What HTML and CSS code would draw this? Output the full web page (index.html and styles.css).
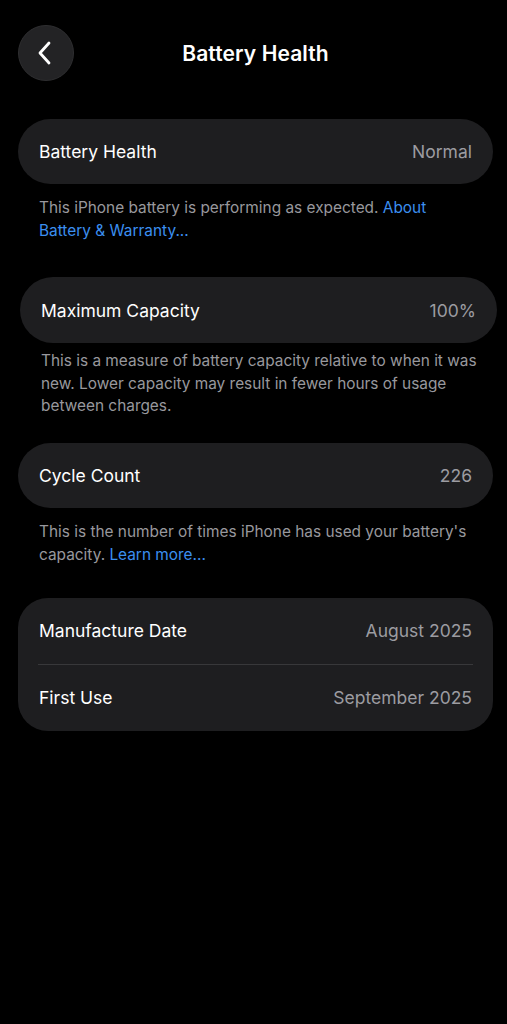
FILE: index.html
```html
<!DOCTYPE html>
<html lang="en">
<head>
    <meta charset="UTF-8">
    <meta name="viewport" content="width=device-width, initial-scale=1.0">
    <title>Battery Health</title>
    <link rel="stylesheet" href="styles.css">
</head>
<body>
    <div class="page">
        <div class="header">
            <button class="back" aria-label="Back">
                <svg width="18" height="26" viewBox="0 0 18 26">
                    <path d="M13 3 L4 13 L13 23" fill="none" stroke="#fff" stroke-width="2.8" stroke-linecap="round" stroke-linejoin="round"/>
                </svg>
            </button>
            <div class="title">Battery Health</div>
        </div>

        <div class="section">
            <div class="card">
                <div class="row">
                    <span class="label">Battery Health</span>
                    <span class="value">Normal</span>
                </div>
            </div>
            <p class="note">This iPhone battery is performing as expected. <a href="#">About Battery &amp; Warranty...</a></p>
        </div>

        <div class="section section-shifted">
            <div class="card">
                <div class="row">
                    <span class="label">Maximum Capacity</span>
                    <span class="value">100%</span>
                </div>
            </div>
            <p class="note">This is a measure of battery capacity relative to when it was new. Lower capacity may result in fewer hours of usage between charges.</p>
        </div>

        <div class="section">
            <div class="card">
                <div class="row">
                    <span class="label">Cycle Count</span>
                    <span class="value">226</span>
                </div>
            </div>
            <p class="note">This is the number of times iPhone has used your battery's capacity. <a href="#">Learn more...</a></p>
        </div>

        <div class="section section-group">
            <div class="card card-group">
                <div class="row">
                    <span class="label">Manufacture Date</span>
                    <span class="value">August 2025</span>
                </div>
                <div class="row">
                    <span class="label">First Use</span>
                    <span class="value">September 2025</span>
                </div>
            </div>
        </div>
    </div>
</body>
</html>
```

FILE: styles.css
```css
body {
    margin: 0;
    padding: 0;
    background-color: #000000;
    font-family: Inter, "Noto Sans", sans-serif;
    color: #FFFFFF;
}

.page {
    padding: 0 14px 0 18px;
}

.header {
    position: relative;
    display: flex;
    align-items: center;
    padding-top: 25px;
    height: 56px;
}

.back {
    width: 56px;
    height: 56px;
    border-radius: 50%;
    border: 1px solid #2e2e30;
    background-color: #232325;
    display: flex;
    align-items: center;
    justify-content: center;
    padding: 0 3px 0 0;
    cursor: pointer;
}

.title {
    position: absolute;
    left: 0;
    right: 0;
    margin-left: -18px;
    margin-right: -14px;
    padding-left: 4px;
    text-align: center;
    font-size: 21px;
    font-weight: 600;
    letter-spacing: 0.1px;
    pointer-events: none;
}

.section {
    margin-top: 38px;
}

.section + .section {
    margin-top: 35px;
}

.card {
    background-color: #1e1e20;
    border-radius: 33px;
}

.row {
    display: flex;
    justify-content: space-between;
    align-items: center;
    height: 65px;
    padding: 0 21px;
}

.label {
    font-size: 17.5px;
    color: #FFFFFF;
}

.value {
    font-size: 17.5px;
    color: #9c9ca1;
}

.note {
    margin: 12px 0 0;
    padding: 0 21px;
    font-size: 15.4px;
    line-height: 23px;
    color: #98989d;
}

.note a {
    color: #3b8ff0;
    text-decoration: none;
}

.section-shifted {
    margin-left: 2px;
    margin-right: -4px;
}

.section-shifted .row {
    height: 66px;
}

.section-shifted .note {
    margin-top: 7px;
    padding-right: 14px;
    line-height: 22.5px;
}

.section-shifted + .section {
    margin-top: 25px;
}

.section + .section-group {
    margin-top: 32px;
}

.card-group {
    border-radius: 30px;
}

.card-group .row {
    height: 66px;
    margin: 0 20px;
    padding: 0 1px;
}

.card-group .row + .row {
    border-top: 1px solid #38383a;
}
```
